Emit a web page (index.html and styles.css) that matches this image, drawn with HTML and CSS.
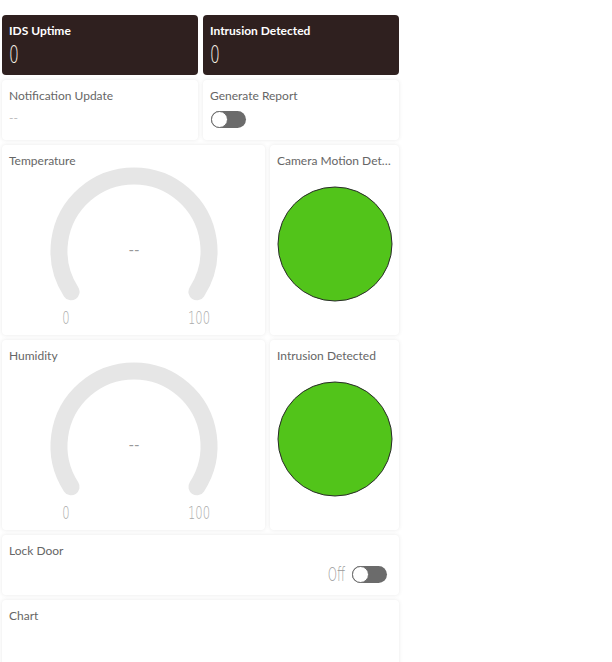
FILE: index.html
```html
<!DOCTYPE html>
<html>
<head>
<meta charset="utf-8">
<link rel="stylesheet" href="styles.css">
</head>
<body>
<div class="dash">
  <div class="card dark half">
    <div class="title">IDS Uptime</div>
    <div class="value">0</div>
  </div>
  <div class="card dark half">
    <div class="title">Intrusion Detected</div>
    <div class="value">0</div>
  </div>
  <div class="card half">
    <div class="title">Notification Update</div>
    <div class="dash-text">--</div>
  </div>
  <div class="card half">
    <div class="title">Generate Report</div>
    <div class="toggle"><span class="knob"></span></div>
  </div>
  <div class="card wide">
    <div class="title">Temperature</div>
    <svg class="gauge" width="180" height="160" viewBox="0 0 180 160">
      <path d="M 27.1 120.8 A 75 75 0 1 1 152.9 120.8" fill="none" stroke="#e6e6e6" stroke-width="17" stroke-linecap="round"/>
      <text x="90" y="84" class="g-val" text-anchor="middle">--</text>
      <text transform="translate(22 153) scale(0.68 1)" class="g-lbl" text-anchor="middle">0</text>
      <text transform="translate(155 153) scale(0.68 1)" class="g-lbl" text-anchor="middle">100</text>
    </svg>
  </div>
  <div class="card narrow">
    <div class="title ellip">Camera Motion Detected</div>
    <svg class="led" width="116" height="116" viewBox="0 0 116 116">
      <circle cx="58" cy="58" r="57" fill="#52c41a" stroke="#2a2a2a" stroke-width="1"/>
    </svg>
  </div>
  <div class="card wide">
    <div class="title">Humidity</div>
    <svg class="gauge" width="180" height="160" viewBox="0 0 180 160">
      <path d="M 27.1 120.8 A 75 75 0 1 1 152.9 120.8" fill="none" stroke="#e6e6e6" stroke-width="17" stroke-linecap="round"/>
      <text x="90" y="84" class="g-val" text-anchor="middle">--</text>
      <text transform="translate(22 153) scale(0.68 1)" class="g-lbl" text-anchor="middle">0</text>
      <text transform="translate(155 153) scale(0.68 1)" class="g-lbl" text-anchor="middle">100</text>
    </svg>
  </div>
  <div class="card narrow">
    <div class="title ellip">Intrusion Detected</div>
    <svg class="led" width="116" height="116" viewBox="0 0 116 116">
      <circle cx="58" cy="58" r="57" fill="#52c41a" stroke="#2a2a2a" stroke-width="1"/>
    </svg>
  </div>
  <div class="card full">
    <div class="title">Lock Door</div>
    <div class="switch-row">
      <span class="off">Off</span>
      <div class="toggle"><span class="knob"></span></div>
    </div>
  </div>
  <div class="card full chart">
    <div class="title">Chart</div>
  </div>
</div>
</body>
</html>
```

FILE: styles.css
```css
html, body {
  margin: 0;
  padding: 0;
  background: #ffffff;
}
body {
  font-family: Lato, "Open Sans", sans-serif;
  width: 612px;
  height: 662px;
  overflow: hidden;
}
.dash {
  width: 397px;
  margin-left: 2px;
  padding-top: 15px;
  display: grid;
  grid-template-columns: repeat(6, 1fr);
  grid-template-rows: 60px 60px 190px 190px 60px 80px;
  gap: 5px;
}
.card {
  background: #fff;
  border-radius: 4px;
  box-shadow: 0 0 4px rgba(0, 0, 0, 0.09);
  padding: 8px 7px;
  box-sizing: border-box;
  display: flex;
  flex-direction: column;
  min-width: 0;
}
.half { grid-column: span 3; }
.wide { grid-column: span 4; }
.narrow { grid-column: span 2; }
.full { grid-column: span 6; }
.title {
  font-size: 12px;
  line-height: 16px;
  color: #666;
  white-space: nowrap;
}
.ellip {
  overflow: hidden;
  text-overflow: ellipsis;
}
.dark {
  background: #2f201f;
  box-shadow: none;
}
.dark .title {
  color: #fff;
  font-weight: bold;
}
.dark .value {
  color: #fbf6ea;
  font-family: "DejaVu Sans", sans-serif;
  font-weight: 200;
  font-size: 25px;
  line-height: 26px;
  margin-top: 3px;
  transform: scaleX(0.62);
  transform-origin: left center;
}
.dash-text {
  color: #bbb;
  font-size: 12px;
  margin-top: 6px;
}
.toggle {
  width: 35px;
  height: 17px;
  border-radius: 9px;
  background: #6b6b6b;
  margin-top: 7px;
  position: relative;
  box-sizing: border-box;
  margin-left: 1px;
}
.knob {
  position: absolute;
  left: 0;
  top: 0;
  width: 17px;
  height: 17px;
  border-radius: 50%;
  background: #fff;
  border: 1.5px solid #6b6b6b;
  box-sizing: border-box;
}
.gauge {
  display: block;
  margin: 2px auto 0;
  overflow: visible;
}
.g-val {
  font-family: Lato, sans-serif;
  font-size: 15px;
  fill: #999;
}
.g-lbl {
  font-family: "DejaVu Sans", sans-serif;
  font-weight: 200;
  font-size: 17px;
  fill: #aaa;
}
.led {
  display: block;
  margin: 17px auto 0;
}
.switch-row {
  display: flex;
  justify-content: flex-end;
  align-items: center;
  gap: 6px;
  margin-top: 5px;
  padding-right: 5px;
}
.switch-row .toggle { margin-top: 0; }
.off {
  font-family: "DejaVu Sans", sans-serif;
  font-weight: 200;
  font-size: 19px;
  line-height: 20px;
  color: #999;
  display: inline-block;
  transform: scaleX(0.62);
  transform-origin: right center;
}
```
